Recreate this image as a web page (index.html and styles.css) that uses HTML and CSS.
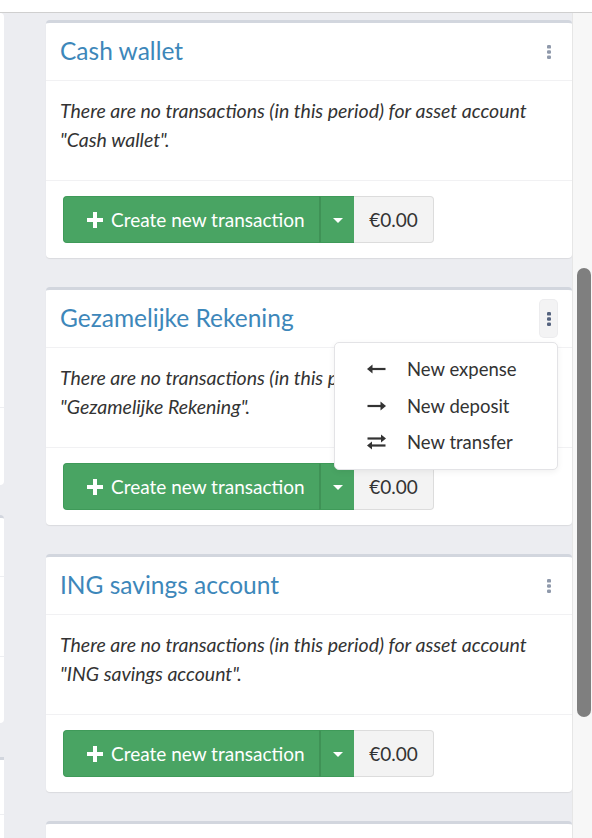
FILE: index.html
```html
<!DOCTYPE html>
<html lang="en">
<head>
<meta charset="utf-8">
<title>Accounts</title>
<link rel="stylesheet" href="styles.css">
</head>
<body>
<div class="topbar"></div>
<div class="shell">
  <div class="content">
    <div class="side">
      <div class="side-card side-a"><div class="side-sec sa1"></div></div>
      <div class="side-card side-b"><div class="side-sec sb1"></div><div class="side-sec sb2"></div></div>
      <div class="side-card side-c"><div class="side-sec sc1"></div></div>
    </div>
    <div class="main">
      <div class="card">
        <div class="card-header">
          <h3 class="card-title">Cash wallet</h3>
          <div class="kebab"><svg width="6" height="16" viewBox="0 0 6 16"><rect x="1" y="1" width="4" height="3.6" rx="1.2"/><rect x="1" y="6.2" width="4" height="3.6" rx="1.2"/><rect x="1" y="11.4" width="4" height="3.6" rx="1.2"/></svg></div>
        </div>
        <div class="card-body"><p>There are no transactions (in this period) for asset account "Cash wallet".</p></div>
        <div class="card-footer">
          <div class="btn-group">
            <span class="btn-main"><svg class="plus" width="16" height="16" viewBox="0 0 16 16"><path d="M6 0h4v6h6v4h-6v6H6v-6H0V6h6z"/></svg>Create new transaction</span>
            <span class="btn-toggle"><span class="caret"></span></span>
            <span class="addon">€0.00</span>
          </div>
        </div>
      </div>

      <div class="card">
        <div class="card-header">
          <h3 class="card-title">Gezamelijke Rekening</h3>
          <div class="kebab active"><svg width="6" height="16" viewBox="0 0 6 16"><rect x="1" y="1" width="4" height="3.6" rx="1.2"/><rect x="1" y="6.2" width="4" height="3.6" rx="1.2"/><rect x="1" y="11.4" width="4" height="3.6" rx="1.2"/></svg>
            <div class="menu">
              <div class="menu-item"><svg class="mi" width="20" height="12" viewBox="0 0 20 12"><path d="M19 6H3" stroke="#333" stroke-width="2.2"/><path d="M0.5 6L6 1.5V10.5Z" fill="#333"/></svg><span>New expense</span></div>
              <div class="menu-item"><svg class="mi" width="20" height="12" viewBox="0 0 20 12"><path d="M1 6H17" stroke="#333" stroke-width="2.2"/><path d="M19.5 6L14 1.5V10.5Z" fill="#333"/></svg><span>New deposit</span></div>
              <div class="menu-item"><svg class="mi" width="20" height="16" viewBox="0 0 20 16"><path d="M1 4.5H16" stroke="#333" stroke-width="2.2"/><path d="M19.5 4.5L14.5 0.5V8.5Z" fill="#333"/><path d="M19 11.5H4" stroke="#333" stroke-width="2.2"/><path d="M0.5 11.5L5.5 7.5V15.5Z" fill="#333"/></svg><span>New transfer</span></div>
            </div>
          </div>
        </div>
        <div class="card-body"><p>There are no transactions (in this period) for asset account "Gezamelijke Rekening".</p></div>
        <div class="card-footer">
          <div class="btn-group">
            <span class="btn-main"><svg class="plus" width="16" height="16" viewBox="0 0 16 16"><path d="M6 0h4v6h6v4h-6v6H6v-6H0V6h6z"/></svg>Create new transaction</span>
            <span class="btn-toggle"><span class="caret"></span></span>
            <span class="addon">€0.00</span>
          </div>
        </div>
      </div>

      <div class="card">
        <div class="card-header">
          <h3 class="card-title">ING savings account</h3>
          <div class="kebab"><svg width="6" height="16" viewBox="0 0 6 16"><rect x="1" y="1" width="4" height="3.6" rx="1.2"/><rect x="1" y="6.2" width="4" height="3.6" rx="1.2"/><rect x="1" y="11.4" width="4" height="3.6" rx="1.2"/></svg></div>
        </div>
        <div class="card-body"><p>There are no transactions (in this period) for asset account "ING savings account".</p></div>
        <div class="card-footer">
          <div class="btn-group">
            <span class="btn-main"><svg class="plus" width="16" height="16" viewBox="0 0 16 16"><path d="M6 0h4v6h6v4h-6v6H6v-6H0V6h6z"/></svg>Create new transaction</span>
            <span class="btn-toggle"><span class="caret"></span></span>
            <span class="addon">€0.00</span>
          </div>
        </div>
      </div>

      <div class="card">
        <div class="card-header"></div>
      </div>
    </div>
  </div>
  <div class="track"><div class="thumb"></div></div>
</div>
</body>
</html>
```

FILE: styles.css
```css
* { box-sizing: border-box; }
html, body { margin: 0; padding: 0; }
body {
  width: 592px;
  height: 838px;
  overflow: hidden;
  background: #ecedf1;
  font-family: "Lato", "Noto Sans", sans-serif;
  color: #333;
}
.topbar {
  height: 13px;
  background: #fff;
  border-bottom: 1px solid #cfcfcf;
}
.shell {
  display: flex;
  height: 825px;
}
.content {
  display: flex;
  width: 572px;
  overflow: hidden;
}
.side {
  width: 4px;
  flex: none;
  overflow: hidden;
}
.side-card {
  width: 4px;
  background: #fff;
  border-radius: 0 4px 4px 0;
}
.side-a { height: 472px; }
.sa1 { height: 395px; border-bottom: 1px solid #eeeff2; }
.side-b { margin-top: 30px; height: 208px; border-top: 3px solid #d2d6de; }
.sb1 { height: 59px; border-bottom: 1px solid #eeeff2; }
.sb2 { height: 80px; border-bottom: 1px solid #eeeff2; }
.side-c { margin-top: 34px; height: 120px; border-top: 3px solid #d2d6de; border-radius: 0; }
.sc1 { height: 55px; border-bottom: 1px solid #eeeff2; }

.main {
  margin-left: 42px;
  width: 526px;
  flex: none;
  padding-top: 7px;
}
.card {
  background: #fff;
  border-top: 3px solid #d2d6de;
  border-radius: 4px;
  box-shadow: 0 1px 1px rgba(0,0,0,0.08);
  margin-bottom: 29px;
}
.card-header {
  height: 58px;
  border-bottom: 1px solid #f1f1f3;
  display: flex;
  align-items: center;
  justify-content: space-between;
  padding: 0 15px 0 14px;
}
.card-title {
  margin: 0 0 3px;
  font-weight: 400;
  font-size: 24.5px;
  color: #3d87ba;
}
.kebab {
  position: relative;
  width: 17px;
  height: 37px;
  display: flex;
  align-items: center;
  justify-content: center;
  border-radius: 4px;
  fill: #8f99ab;
}
.kebab.active {
  background: #f3f3f4;
  box-shadow: 0 0 0 1px #ececee;
  fill: #55637f;
}
.card-body {
  padding: 16px 12px 14px 14px;
}
.card-body p {
  margin: 0 0 12px;
  font-style: italic;
  font-size: 19.5px;
  line-height: 28.5px;
}
.card-footer {
  border-top: 1px solid #f1f1f3;
  padding: 15px 17px;
}
.btn-group {
  display: inline-flex;
  height: 47px;
  font-size: 19px;
  white-space: nowrap;
}
.btn-main {
  display: flex;
  align-items: center;
  background: #49a463;
  color: #fff;
  border: 1px solid #3f9a59;
  border-right: none;
  border-radius: 4px 0 0 4px;
  padding: 0 0 0 23px;
  width: 256px;
}
.plus { fill: #fff; margin-right: 8px; flex: none; }
.btn-toggle {
  width: 35px;
  background: #49a463;
  border-left: 2px solid #3f9256;
  border-top: 1px solid #3f9a59;
  border-bottom: 1px solid #3f9a59;
  display: flex;
  align-items: center;
  justify-content: center;
}
.caret {
  width: 0;
  height: 0;
  border-left: 5px solid transparent;
  border-right: 5px solid transparent;
  border-top: 5px solid #fff;
  margin-top: 2px;
}
.addon {
  width: 80px;
  display: flex;
  align-items: center;
  justify-content: center;
  background: #f3f3f3;
  border: 1px solid #dcdcdc;
  border-left: none;
  border-radius: 0 4px 4px 0;
  color: #333;
}
.menu {
  position: absolute;
  top: 42px;
  right: -1px;
  width: 224px;
  background: #fff;
  border: 1px solid #e3e3e6;
  border-radius: 5px;
  box-shadow: 0 2px 6px rgba(0,0,0,0.06);
  padding: 8px 0;
  z-index: 5;
}
.menu-item {
  display: flex;
  align-items: center;
  height: 36.5px;
  padding-left: 31px;
  font-size: 18.5px;
  color: #333;
  white-space: nowrap;
}
.mi { width: 21px; margin-right: 20px; flex: none; }
.track {
  width: 20px;
  flex: none;
  background: #f7f7f7;
  border-left: 1px solid #e6e6e6;
  padding-left: 4px;
}
.thumb {
  margin-top: 255px;
  width: 14px;
  height: 449px;
  background: #7f7f7f;
  border-radius: 7px;
}
```
